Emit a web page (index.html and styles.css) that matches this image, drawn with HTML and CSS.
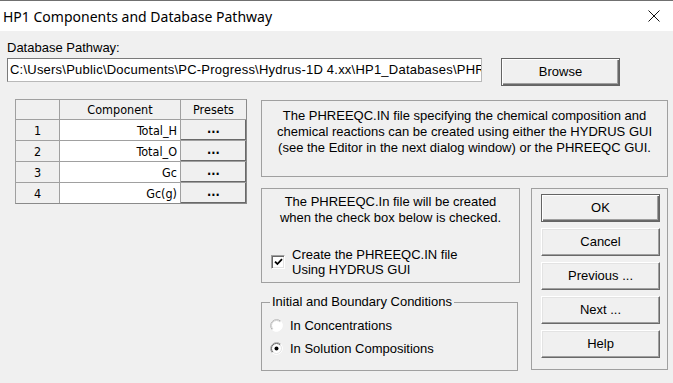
FILE: index.html
```html
<!DOCTYPE html>
<html>
<head>
<meta charset="utf-8">
<link rel="stylesheet" href="styles.css">
</head>
<body>
<div class="window">
  <header class="titlebar">
    <span class="title">HP1 Components and Database Pathway</span>
    <svg class="close" width="12" height="12" viewBox="0 0 12 12"><path d="M0.5 0.5 L11.5 11.5 M11.5 0.5 L0.5 11.5" stroke="#111" stroke-width="1" fill="none"/></svg>
  </header>
  <main class="content">
    <div class="path-label">Database Pathway:</div>
    <div class="path-row">
      <div class="path-input">C:\Users\Public\Documents\PC-Progress\Hydrus-1D 4.xx\HP1_Databases\PHR</div>
      <button class="btn default browse">Browse</button>
    </div>
    <div class="main-row">
      <div class="grid">
        <div class="hcell"></div>
        <div class="hcell">Component</div>
        <div class="hcell">Presets</div>

        <div class="rcell">1</div>
        <div class="ccell">Total_H</div>
        <div class="pcell">...</div>

        <div class="rcell">2</div>
        <div class="ccell">Total_O</div>
        <div class="pcell">...</div>

        <div class="rcell">3</div>
        <div class="ccell">Gc</div>
        <div class="pcell">...</div>

        <div class="rcell">4</div>
        <div class="ccell">Gc(g)</div>
        <div class="pcell">...</div>
      </div>

      <div class="right">
        <div class="box info">
          The PHREEQC.IN file specifying the chemical composition and<br>
          chemical reactions can be created using either the HYDRUS GUI<br>
          (see the Editor in the next dialog window) or the PHREEQC GUI.
        </div>
        <div class="lower">
          <div class="lower-left">
            <div class="box create">
              <div class="create-text">The PHREEQC.In file will be created<br>when the check box below is checked.</div>
              <div class="check-row">
                <span class="checkbox"><svg width="9" height="8" viewBox="0 0 9 8"><path d="M1 3.6 L3.4 6 L8 1.2" stroke="#000" stroke-width="1.8" fill="none"/></svg></span>
                <span class="check-label">Create the PHREEQC.IN file<br>Using HYDRUS GUI</span>
              </div>
            </div>
            <fieldset class="group">
              <legend>Initial and Boundary Conditions</legend>
              <div class="radio-row">
                <svg class="radio" width="13" height="13" viewBox="0 0 13 13">
                  <circle cx="6.5" cy="6.5" r="6" fill="#fff"/>
                  <path d="M2.26 10.74 A6 6 0 0 1 10.74 2.26" fill="none" stroke="#b4b4b4"/>
                  <path d="M2.96 10.04 A5 5 0 0 1 10.04 2.96" fill="none" stroke="#d0d0d0"/>
                  <path d="M2.26 10.74 A6 6 0 0 0 10.74 2.26" fill="none" stroke="#fff"/>
                </svg>
                <span>In Concentrations</span>
              </div>
              <div class="radio-row second">
                <svg class="radio" width="13" height="13" viewBox="0 0 13 13">
                  <circle cx="6.5" cy="6.5" r="6" fill="#fff"/>
                  <path d="M2.26 10.74 A6 6 0 0 1 10.74 2.26" fill="none" stroke="#a0a0a0"/>
                  <path d="M2.96 10.04 A5 5 0 0 1 10.04 2.96" fill="none" stroke="#696969"/>
                  <path d="M2.26 10.74 A6 6 0 0 0 10.74 2.26" fill="none" stroke="#fff"/>
                  <path d="M2.96 10.04 A5 5 0 0 0 10.04 2.96" fill="none" stroke="#e3e3e3"/>
                  <circle cx="6.5" cy="6.5" r="2" fill="#000"/>
                </svg>
                <span>In Solution Compositions</span>
              </div>
            </fieldset>
          </div>
          <div class="box buttons">
            <button class="btn default">OK</button>
            <button class="btn">Cancel</button>
            <button class="btn">Previous ...</button>
            <button class="btn">Next ...</button>
            <button class="btn">Help</button>
          </div>
        </div>
      </div>
    </div>
  </main>
</div>
</body>
</html>
```
FILE: styles.css
```css
* { box-sizing: border-box; }
html, body { margin: 0; padding: 0; }
body {
  background: #f0f0f0;
  font-family: "Liberation Sans", Arial, sans-serif;
  font-size: 13px;
  line-height: 15px;
  color: #000;
}
.window {
  width: 673px;
  height: 383px;
  overflow: hidden;
  background: #f0f0f0;
}
.titlebar {
  height: 31px;
  border-top: 1px solid #707070;
  background: #fff;
  display: flex;
  align-items: center;
  justify-content: space-between;
  padding: 0 13px 0 3px;
}
.title {
  font-family: "Noto Sans", "Open Sans", sans-serif;
  font-size: 14px;
  color: #000;
}
.close { display: block; }
.content {
  padding: 9px 0 0 7px;
}
.path-label {
  height: 15px;
  line-height: 15px;
}
.path-row {
  display: flex;
  align-items: flex-start;
  gap: 19px;
  margin-top: 3px;
}
.path-input {
  width: 475px;
  height: 24px;
  border: 1px solid;
  border-color: #7a7a7a #b9b9b9 #b9b9b9 #7a7a7a;
  background: #fff;
  padding-left: 2px;
  line-height: 22px;
  letter-spacing: 0.22px;
  white-space: nowrap;
  overflow: hidden;
}
.btn {
  display: block;
  width: 119px;
  height: 28px;
  margin: 0;
  padding: 0 0 1px 0;
  font: inherit;
  color: #000;
  text-align: center;
  background: #f0f0f0;
  border: 1px solid;
  border-color: #fff #696969 #696969 #fff;
  box-shadow: inset -1px -1px #a0a0a0, inset 1px 1px #e3e3e3;
}
.btn.default {
  border-color: #646464;
  box-shadow: inset 1px 1px #fff, inset -1px -1px #696969, inset -2px -2px #a0a0a0;
}
.main-row {
  display: flex;
  align-items: flex-start;
  gap: 14px;
  margin: 13px 0 0 8px;
}
.grid {
  display: grid;
  grid-template-columns: 43px 120px 65px;
  grid-template-rows: 19px repeat(4, 20px);
  gap: 1px;
  width: 232px;
  background: #a0a0a0;
  border: 1px solid #a0a0a0;
  border-right-color: #8a8a8a;
  border-bottom-color: #8a8a8a;
  font-family: "DejaVu Sans Condensed", "DejaVu Sans", Verdana, sans-serif;
  font-size: 12.5px;
  font-stretch: condensed;
}
.hcell, .rcell, .ccell, .pcell {
  display: flex;
  align-items: center;
  justify-content: center;
  background: #f0f0f0;
}
.ccell {
  background: #fff;
  justify-content: flex-end;
  padding-right: 3px;
}
.pcell {
  font-weight: bold;
  box-shadow: inset -1px -1px #696969;
  padding-bottom: 3px;
}
.right {
  width: 407px;
  margin-top: 1px;
}
.box {
  border: 1px solid #a0a0a0;
}
.info {
  height: 77px;
  padding-top: 7px;
  text-align: center;
  line-height: 16px;
}
.lower {
  display: flex;
  align-items: flex-start;
  gap: 11px;
  margin-top: 11px;
}
.lower-left {
  width: 259px;
  display: flex;
  flex-direction: column;
}
.create {
  height: 95px;
  padding-top: 5px;
}
.create-text {
  text-align: center;
  line-height: 16px;
}
.check-row {
  display: flex;
  align-items: center;
  margin: 21px 0 0 9px;
}
.checkbox {
  width: 14px;
  height: 14px;
  margin-right: 7px;
  display: flex;
  align-items: center;
  justify-content: center;
  background: #fff;
  border: 1px solid;
  border-color: #a0a0a0 #fff #fff #a0a0a0;
  box-shadow: inset 1px 1px #696969, inset -1px -1px #e3e3e3;
}
.check-label {
  line-height: 15px;
}
.group {
  width: 257px;
  margin: 11px 0 0 0;
  padding: 7px 0 14px 8px;
  border: 1px solid #a0a0a0;
  min-width: 0;
}
.group legend {
  padding: 0 2px;
  line-height: 16px;
}
.radio-row {
  display: flex;
  align-items: center;
  height: 16px;
}
.radio-row.second { margin-top: 7px; }
.radio {
  display: block;
  margin-right: 7px;
}
.buttons {
  width: 137px;
  height: 182px;
  padding: 5px 0 0 9px;
  display: flex;
  flex-direction: column;
  gap: 6px;
}
```
